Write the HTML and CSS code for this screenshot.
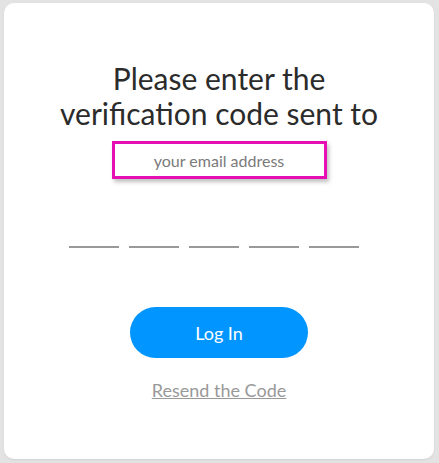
FILE: index.html
```html
<!DOCTYPE html>
<html>
<head>
<meta charset="utf-8">
<link rel="stylesheet" href="styles.css">
</head>
<body>
<div class="card">
  <h1 class="title">Please enter the<br>verification code sent to</h1>
  <div class="email">your email address</div>
  <div class="code">
    <span class="digit"></span>
    <span class="digit"></span>
    <span class="digit"></span>
    <span class="digit"></span>
    <span class="digit"></span>
  </div>
  <button class="login">Log In</button>
  <a class="resend" href="#">Resend the Code</a>
</div>
</body>
</html>
```
FILE: styles.css
```css
html, body { margin: 0; padding: 0; }
body {
  background: #e3e3e3;
  font-family: Lato, "Liberation Sans", sans-serif;
  width: 439px;
  height: 463px;
  padding: 3px 5px 4px 4px;
  box-sizing: border-box;
}
.card {
  background: #fff;
  border-radius: 10px;
  height: 456px;
  display: flex;
  flex-direction: column;
  align-items: center;
  box-shadow: 0 1px 2px rgba(0,0,0,0.08);
}
.title {
  margin: 58px 0 0;
  font-weight: 400;
  font-size: 30px;
  line-height: 35px;
  color: #2b2b2b;
  text-align: center;
}
.email {
  margin-top: 10px;
  width: 209px;
  height: 32px;
  border: 3px solid #e60fb3;
  box-shadow: 2px 3px 4px rgba(0,0,0,0.25);
  color: #7a7a7a;
  font-size: 16px;
  display: flex;
  align-items: center;
  justify-content: center;
}
.code {
  margin-top: 67px;
  margin-right: 10px;
  display: flex;
  gap: 10px;
}
.digit {
  display: block;
  width: 50px;
  height: 2px;
  background: #999;
}
.login {
  margin-top: 59px;
  width: 178px;
  height: 51px;
  border: none;
  border-radius: 26px;
  background: #0095ff;
  color: #fff;
  font-family: Lato, "Liberation Sans", sans-serif;
  font-size: 18px;
  padding: 0;
}
.resend {
  margin-top: 21px;
  color: #999;
  font-size: 18px;
  text-decoration: underline;
}
```
